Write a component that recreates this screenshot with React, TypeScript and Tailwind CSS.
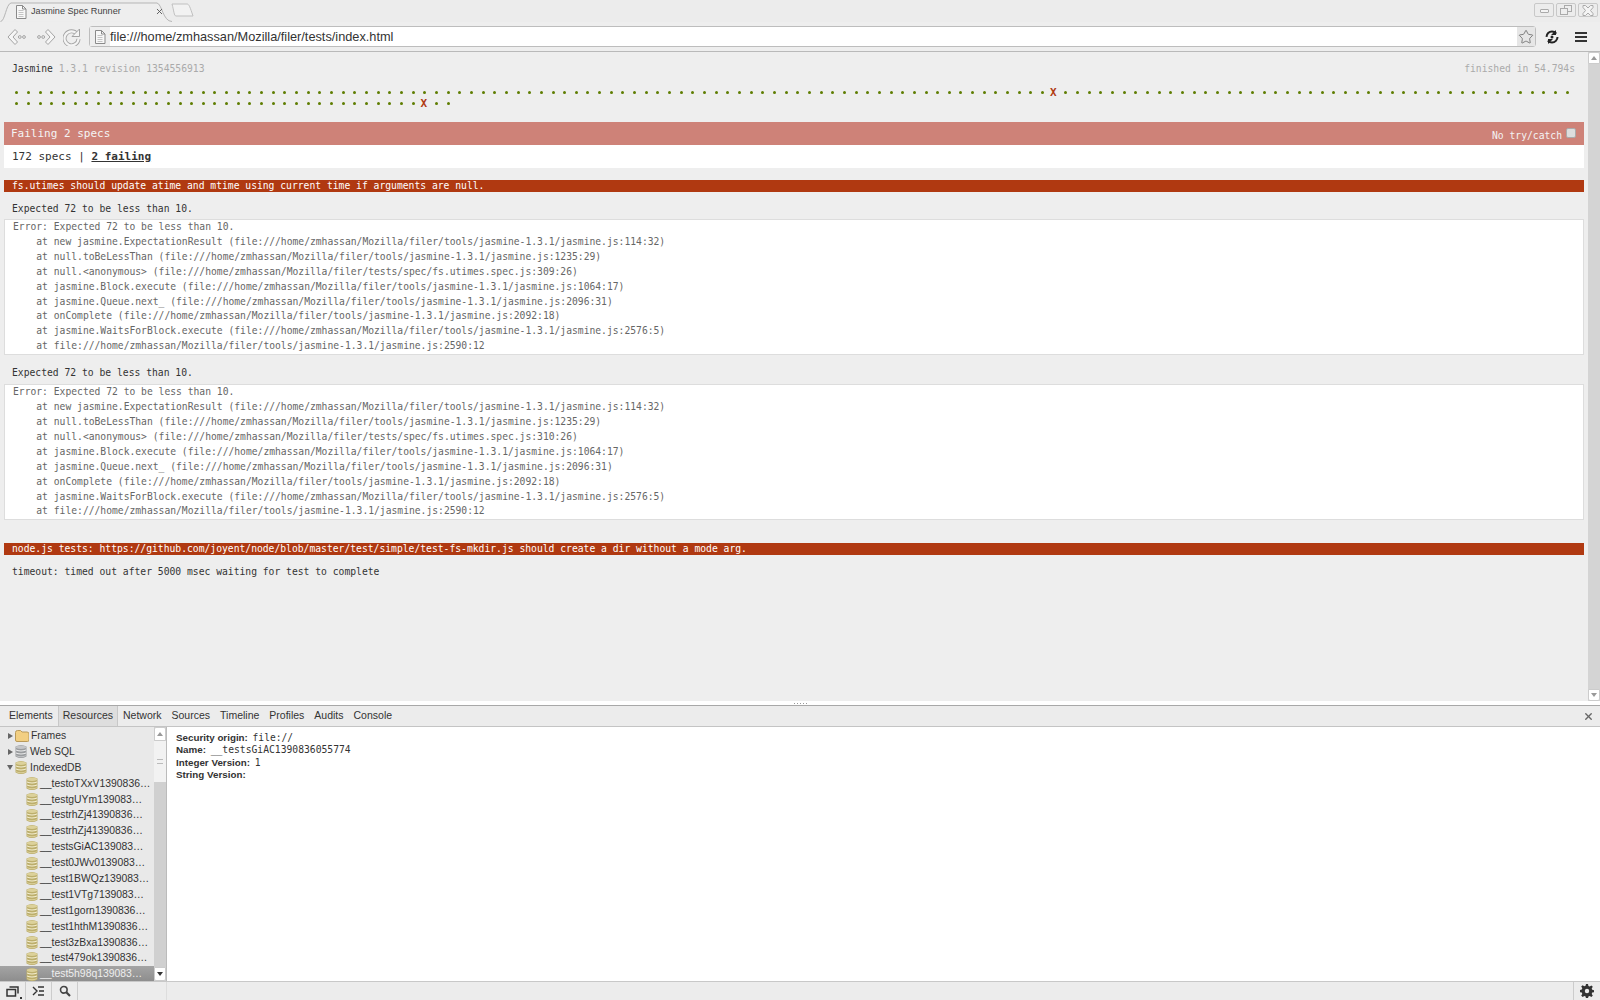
import { Star, X } from "lucide-react";

const mono = "font-['DejaVu_Sans_Mono','Liberation_Mono',monospace]";
const tools = "file:///home/zmhassan/Mozilla/filer/tools/jasmine-1.3.1/jasmine.js";

const stack = (specLine: string) => [
  `Error: Expected 72 to be less than 10.`,
  `    at new jasmine.ExpectationResult (${tools}:114:32)`,
  `    at null.toBeLessThan (${tools}:1235:29)`,
  `    at null.<anonymous> (file:///home/zmhassan/Mozilla/filer/tests/spec/fs.utimes.spec.js:${specLine})`,
  `    at jasmine.Block.execute (${tools}:1064:17)`,
  `    at jasmine.Queue.next_ (${tools}:2096:31)`,
  `    at onComplete (${tools}:2092:18)`,
  `    at jasmine.WaitsForBlock.execute (${tools}:2576:5)`,
  `    at ${tools}:2590:12`,
];

const dbNames = [
  "__testoTXxV1390836…",
  "__testgUYm139083…",
  "__testrhZj41390836…",
  "__testrhZj41390836…",
  "__testsGiAC139083…",
  "__test0JWv0139083…",
  "__test1BWQz139083…",
  "__test1VTg7139083…",
  "__test1gorn1390836…",
  "__test1hthM1390836…",
  "__test3zBxa1390836…",
  "__test479ok1390836…",
];

const FileIcon = () => (
  <svg width="14" height="16" viewBox="0 0 14 16" fill="none">
    <path d="M2.5 1.5h6l3.5 3.500v9.500h-9.500z" fill="#f8f8f8" stroke="#8a8a8a" />
    <path d="M8.500 1.500v3.500h3.500" stroke="#8a8a8a" />
    <path d="M4.500 6.500h5M4.500 8.500h5M4.500 10.500h5M4.500 12.500h5" stroke="#c4c4c4" />
  </svg>
);

// stacked-disc database icon used all over the resources tree
const DbIcon = ({ grey }: { grey?: boolean }) => {
  const dark = grey ? "#9a9c9e" : "#bcae6c";
  const mid = grey ? "#c4c5c7" : "#dcd19a";
  const light = grey ? "#eeeeef" : "#f6f1d4";
  return (
    <svg width="12" height="15" viewBox="0 0 12 15" className="shrink-0">
      <path d="M0.500 2.500Q6 -0.500 11.500 2.500V12.500Q6 15.500 .5 12.500z" fill={dark} />
      <path d="M1 2.500Q6 .5 11 2.500V4Q6 6 1 4z" fill={mid} />
      <path d="M1 5.500Q6 7.500 11 5.500V6.500Q6 8.500 1 6.500z" fill={light} />
      <path d="M1 8.500Q6 10.500 11 8.500V9.500Q6 11.500 1 9.500z" fill={light} />
      <path d="M1 11.200Q6 13.200 11 11.200V12Q6 14.500 1 12z" fill={mid} />
    </svg>
  );
};

const Arrow = ({ flip }: { flip?: boolean }) => (
  <svg width="20" height="18" viewBox="0 0 20 18" fill="none" className={flip ? "-scale-x-100" : ""}>
    <path d="M8 1.500 1 9 8 16.500 10.500 14 6 9 10.500 4z" fill="#f6f6f6" stroke="#a4a4a4" strokeLinejoin="round" />
    <circle cx="12.800" cy="9" r="1.400" stroke="#a4a4a4" />
    <circle cx="17" cy="9" r="1.400" stroke="#a4a4a4" />
  </svg>
);

const Dots = ({ count, failAt }: { count: number; failAt: number }) => (
  <div className="flex h-[11.6px] pl-[7px]">
    {Array.from({ length: count }, (_, i) => (
      <div key={i} className="flex w-[11.67px] shrink-0 items-center justify-center">
        {i === failAt ? (
          <span className="-ml-[2px] text-[11px] leading-none font-bold text-[#b03911]">X</span>
        ) : (
          <div className="h-[3px] w-[3px] rounded-full bg-[#5e7d00]" />
        )}
      </div>
    ))}
  </div>
);

const Trace = ({ lines }: { lines: string[] }) => (
  <div className="mt-[5px] border border-[#ddd] bg-white pl-[8px] text-[9.68px] leading-[14.9px] whitespace-pre text-[#666]">
    {lines.map((l, i) => (
      <div key={i}>{l}</div>
    ))}
  </div>
);

const WinButton = ({ children }: { children: React.ReactNode }) => (
  <div className="flex h-[14px] w-[20px] items-center justify-center rounded-[2px] border border-[#c8c8c8]">
    {children}
  </div>
);

const tabs = ["Elements", "Resources", "Network", "Sources", "Timeline", "Profiles", "Audits", "Console"];

export default function App() {
  return (
    <div className="flex h-[1000px] w-[1600px] flex-col overflow-hidden bg-[#eee] font-['Liberation_Sans',sans-serif]">
      {/* tab strip */}
      <div className="flex h-[22px] shrink-0 items-end justify-between bg-[#ececec] pr-[2px]">
        <div className="flex items-end">
          <div className="relative h-[21px] w-[172px]">
            <svg className="absolute inset-0" width="172" height="21" fill="none">
              <path d="M0.500 20.500C5 20.500 6 3 11 2h146c5 1 6 18.500 15 18.500" fill="#eee" stroke="#b5b5b5" />
            </svg>
            <div className="relative flex h-[21px] items-center pl-[14px] pr-[8px]">
              <FileIcon />
              <span className="ml-[3px] flex-1 pt-[1px] text-[9.15px] text-[#444]">Jasmine Spec Runner</span>
              <X size={9} strokeWidth={2.4} className="text-[#555]" />
            </div>
          </div>
          <svg width="24" height="15" fill="none" className="-ml-[1px] mb-[4px]">
            <path d="M1 1h15c2 0 3 3 6 12H5C3 13 3 8 1 1z" fill="#f2f2f2" stroke="#c0c0c0" />
          </svg>
        </div>
        <div className="mb-[5px] flex gap-[2px]">
          <WinButton>
            <div className="mt-[2px] h-[4px] w-[9px] rounded-[1px] border border-[#aaa] bg-[#f4f4f4]" />
          </WinButton>
          <WinButton>
            <svg width="12" height="10" viewBox="0 0 12 10" fill="#eee" stroke="#aaa">
              <rect x="4.500" y=".5" width="7" height="6" />
              <rect x=".5" y="3.500" width="7" height="6" />
            </svg>
          </WinButton>
          <WinButton>
            <svg width="12" height="11" viewBox="0 0 12 11" fill="#f4f4f4" stroke="#aaa">
              <path d="M1 .5h2.500L6 3 8.500 .5H11v2L8.500 5.500 11 8.500v2H8.500L6 8 3.500 10.500H1v-2L3.500 5.500 1 2.500z" />
            </svg>
          </WinButton>
        </div>
      </div>

      {/* toolbar */}
      <div className="flex h-[30px] shrink-0 items-center border-b border-[#b9b9b9] bg-[#eee] pl-[7px]">
        <Arrow />
        <div className="w-[9px]" />
        <Arrow flip />
        <svg width="18" height="18" viewBox="0 0 18 18" fill="none" className="ml-[7px]">
          <path d="M14 6A7 7 0 1 0 15.500 11" stroke="#a4a4a4" strokeWidth="4" />
          <path d="M14 6A7 7 0 1 0 15.500 11" stroke="#f4f4f4" strokeWidth="2.200" />
          <path d="M16.500 1v7.500h-7.500z" fill="#f4f4f4" stroke="#a4a4a4" strokeLinejoin="round" />
        </svg>
        <div className="ml-[8px] flex h-[21px] w-[1447px] items-center rounded-[3px] border border-[#bdbdbd] bg-white">
          <div className="flex h-[19px] w-[20px] items-center justify-center bg-[#eee]">
            <FileIcon />
          </div>
          <span className="flex-1 text-[12.75px] text-[#333]">file:///home/zmhassan/Mozilla/filer/tests/index.html</span>
          <div className="flex h-[19px] w-[18px] items-center justify-center bg-[#e6e6e6]">
            <Star size={16} strokeWidth={1.2} className="text-[#666]" />
          </div>
        </div>
        <svg width="16" height="16" viewBox="0 0 16 16" fill="none" className="ml-[8px]">
          <circle cx="8" cy="8" r="5.500" stroke="#222" strokeWidth="2" strokeDasharray="13 4" />
          <path d="M12 1v5h-5zM4 15v-5h5z" fill="#222" />
          <circle cx="8" cy="8" r="1.500" fill="#222" />
        </svg>
        <div className="ml-[15px] flex w-[12px] flex-col gap-[2px]">
          <div className="h-[2px] bg-[#333]" />
          <div className="h-[2px] bg-[#333]" />
          <div className="h-[2px] bg-[#333]" />
        </div>
      </div>

      {/* page */}
      <div className="flex h-[649px] shrink-0">
        <div className={`flex-1 px-[4px] pt-[11px] text-[9.7px] leading-[12px] ${mono}`}>
          <div className="flex justify-between pl-[8px] pr-[9px] text-[#aaa]">
            <div>
              <span className="text-[#333]">Jasmine</span> 1.3.1 revision 1354556913
            </div>
            <div>finished in 54.794s</div>
          </div>
          <div className="mt-[11.5px] h-[23.5px]">
            <Dots count={134} failAt={89} />
            <Dots count={38} failAt={35} />
          </div>
          <div className="mt-[12px] flex h-[23px] items-center justify-between bg-[#ce8278] pl-[7px] pr-[8px] text-[#f4f4f4]">
            <span className="text-[11px]">Failing 2 specs</span>
            <div className="flex items-center">
              <span className="mt-[5px]">No try/catch</span>
              <div className="mb-[2px] ml-[4px] h-[10px] w-[10px] rounded-[2px] border border-[#aaa] bg-[#ddd]" />
            </div>
          </div>
          <div className="flex h-[23px] items-center bg-white pl-[8px] text-[11px] text-[#333]">
            172 specs | <span className="ml-[6.6px] font-bold underline">2 failing</span>
          </div>
          <div className="mt-[12px] h-[12px] bg-[#b03911] pl-[8px] leading-[12px] text-white">
            fs.utimes should update atime and mtime using current time if arguments are null.
          </div>
          <div className="mt-[11px] pl-[8px] text-[#333]">Expected 72 to be less than 10.</div>
          <div className="-mt-[1px]">
            <Trace lines={stack("309:26")} />
          </div>
          <div className="mt-[12px] pl-[8px] text-[#333]">Expected 72 to be less than 10.</div>
          <Trace lines={stack("310:26")} />
          <div className="mt-[23px] h-[12px] bg-[#b03911] pl-[8px] leading-[12px] text-white">
            node.js tests: https://github.com/joyent/node/blob/master/test/simple/test-fs-mkdir.js should create a dir without a mode arg.
          </div>
          <div className="mt-[11px] pl-[8px] text-[#333]">timeout: timed out after 5000 msec waiting for test to complete</div>
        </div>
        <div className="flex w-[12px] shrink-0 flex-col bg-[#d4d4d4]">
          <div className="flex h-[12px] items-center justify-center rounded-t-[2px] border border-[#ccc] bg-white">
            <div className="h-0 w-0 border-x-[3.5px] border-b-[4px] border-x-transparent border-b-[#999]" />
          </div>
          <div className="flex-1" />
          <div className="flex h-[12px] items-center justify-center rounded-b-[2px] border border-[#ccc] bg-white">
            <div className="h-0 w-0 border-x-[3.5px] border-t-[4px] border-x-transparent border-t-[#999]" />
          </div>
        </div>
      </div>

      {/* splitter */}
      <div className="flex h-[4px] shrink-0 items-center justify-center gap-[2px] bg-white">
        <div className="h-[1px] w-[1px] bg-[#999]" />
        <div className="h-[1px] w-[1px] bg-[#999]" />
        <div className="h-[1px] w-[1px] bg-[#999]" />
        <div className="h-[1px] w-[1px] bg-[#999]" />
        <div className="h-[1px] w-[1px] bg-[#999]" />
      </div>

      {/* devtools tabs */}
      <div className="flex h-[22px] shrink-0 items-center border-y border-y-[#a8a8a8] border-b-[#c4c4c4] bg-[#ececec] pl-[4px] pr-[6px] text-[10.5px] text-[#333]">
        {tabs.map((t) => (
          <div
            key={t}
            className={
              t === "Resources"
                ? "flex h-full items-center border-x border-[#c8c8c8] bg-[#dedede] px-[4px]"
                : "flex h-full items-center px-[5px]"
            }
          >
            {t}
          </div>
        ))}
        <div className="flex-1" />
        <X size={11} strokeWidth={3} className="text-[#666]" />
      </div>

      {/* resources panel */}
      <div className="flex min-h-0 flex-1">
        <div className="flex w-[167px] shrink-0 border-r border-[#bbb]">
          <div className="w-[154px] shrink-0 overflow-hidden bg-[#e9e9e9] pt-[1px] text-[10.4px] leading-[16px] text-[#333]">
            <div className="flex h-[15.9px] items-center pl-[8px]">
              <div className="h-0 w-0 border-y-[3.5px] border-l-[5px] border-y-transparent border-l-[#666]" />
              <svg width="14" height="12" viewBox="0 0 14 12" className="ml-[2px]">
                <path d="M.5 2.500q0-2 2-2h3l1.500 1.500h5q2 0 2 2v6q0 1.500-1.500 1.500h-10.500q-1.500 0-1.500-1.500z" fill="#f2cf82" stroke="#b99a5a" />
              </svg>
              <span className="ml-[2px]">Frames</span>
            </div>
            <div className="flex h-[15.9px] items-center pl-[8px]">
              <div className="h-0 w-0 border-y-[3.5px] border-l-[5px] border-y-transparent border-l-[#666]" />
              <div className="ml-[2px] flex">
                <DbIcon grey />
              </div>
              <span className="ml-[3px]">Web SQL</span>
            </div>
            <div className="flex h-[15.9px] items-center pl-[7px]">
              <div className="h-0 w-0 border-x-[3.5px] border-t-[5px] border-x-transparent border-t-[#666]" />
              <div className="ml-[2px] flex">
                <DbIcon />
              </div>
              <span className="ml-[3px]">IndexedDB</span>
            </div>
            {dbNames.map((n, i) => (
              <div key={i} className="flex h-[15.9px] items-center pl-[26px]">
                <DbIcon />
                <span className="ml-[2px] whitespace-nowrap">{n}</span>
              </div>
            ))}
            <div className="flex h-[16px] items-center bg-gradient-to-b from-[#a4a4a4] to-[#8c8c8c] pl-[26px] text-[#eee]">
              <DbIcon />
              <span className="ml-[2px] whitespace-nowrap">__test5h98q139083…</span>
            </div>
          </div>
          <div className="flex w-[12px] shrink-0 flex-col bg-[#d0d0d0]">
            <div className="flex h-[14px] items-center justify-center rounded-t-[2px] border border-[#ccc] bg-white">
              <div className="h-0 w-0 border-x-[3.5px] border-b-[4px] border-x-transparent border-b-[#999]" />
            </div>
            <div className="flex h-[41px] items-center justify-center bg-[#f2f2f2]">
              <div className="h-[5px] w-[6px] border-y border-[#bbb]" />
            </div>
            <div className="flex-1" />
            <div className="flex h-[14px] items-center justify-center rounded-b-[2px] border border-[#ccc] bg-white">
              <div className="h-0 w-0 border-x-[3.5px] border-t-[4px] border-x-transparent border-t-[#333]" />
            </div>
          </div>
        </div>
        <div className="flex-1 bg-white pl-[9px] pt-[4.5px] text-[9.8px] leading-[12.6px] text-[#333]">
          <div className="h-[12.6px]">
            <b>Security origin:</b> <span className={`ml-[2px] text-[9.6px] ${mono}`}>file://</span>
          </div>
          <div className="h-[12.6px]">
            <b>Name:</b> <span className={`ml-[2px] text-[9.7px] ${mono}`}>__testsGiAC1390836055774</span>
          </div>
          <div className="h-[12.6px]">
            <b>Integer Version:</b> <span className={`ml-[2px] text-[9.6px] ${mono}`}>1</span>
          </div>
          <div className="h-[12.6px]">
            <b>String Version:</b>
          </div>
        </div>
      </div>

      {/* status bar */}
      <div className="flex h-[19px] shrink-0 items-center border-t border-[#c8c8c8] bg-[#ececec]">
        <div className="relative flex h-full w-[26px] items-center justify-center border-r border-[#ccc]">
          <svg width="13" height="11" viewBox="0 0 13 11" fill="none">
            <rect x="1" y="3.500" width="8.500" height="6.500" fill="#ececec" stroke="#333" strokeWidth="1.500" />
            <path d="M3.500 1h8.500v6.500" stroke="#333" strokeWidth="1.500" />
          </svg>
          <div className="absolute bottom-[1px] right-[3px] h-[2px] w-[2px] bg-[#333]" />
        </div>
        <div className="flex h-full w-[26px] items-center justify-center border-r border-[#ccc]">
          <svg width="13" height="10" viewBox="0 0 13 10" fill="none" stroke="#333" strokeWidth="1.400">
            <path d="M1 1l4 4-4 4M6 1h6M7 5h5M6 9h6" />
          </svg>
        </div>
        <div className="flex h-full w-[26px] items-center justify-center border-r border-[#ccc]">
          <svg width="12" height="12" viewBox="0 0 12 12" fill="none" stroke="#444" strokeWidth="1.600">
            <circle cx="4.800" cy="4.800" r="3.300" />
            <path d="M7.300 7.300 11 11" strokeWidth="2.200" />
          </svg>
        </div>
        <div className="h-full w-[89px] border-r border-[#ddd]" />
        <div className="flex-1" />
        <div className="flex h-full w-[27px] items-center justify-center border-l border-[#ccc]">
          <svg width="14" height="14" viewBox="0 0 14 14">
            <path
              d="M6 0h2l.4 2 1.300.5 1.700-1.100 1.400 1.400-1.100 1.700.5 1.300 2 .4v2l-2 .4-.5 1.300 1.100 1.700-1.400 1.400-1.700-1.100-1.300.5-.4 2H6l-.4-2-1.300-.5-1.700 1.100-1.400-1.400 1.100-1.700-.5-1.300-2-.4V6l2-.4.5-1.300-1.100-1.700 1.400-1.400 1.700 1.100 1.300-.5z"
              fill="#333"
            />
            <circle cx="7" cy="7" r="2.200" fill="#ececec" />
          </svg>
        </div>
      </div>
    </div>
  );
}
